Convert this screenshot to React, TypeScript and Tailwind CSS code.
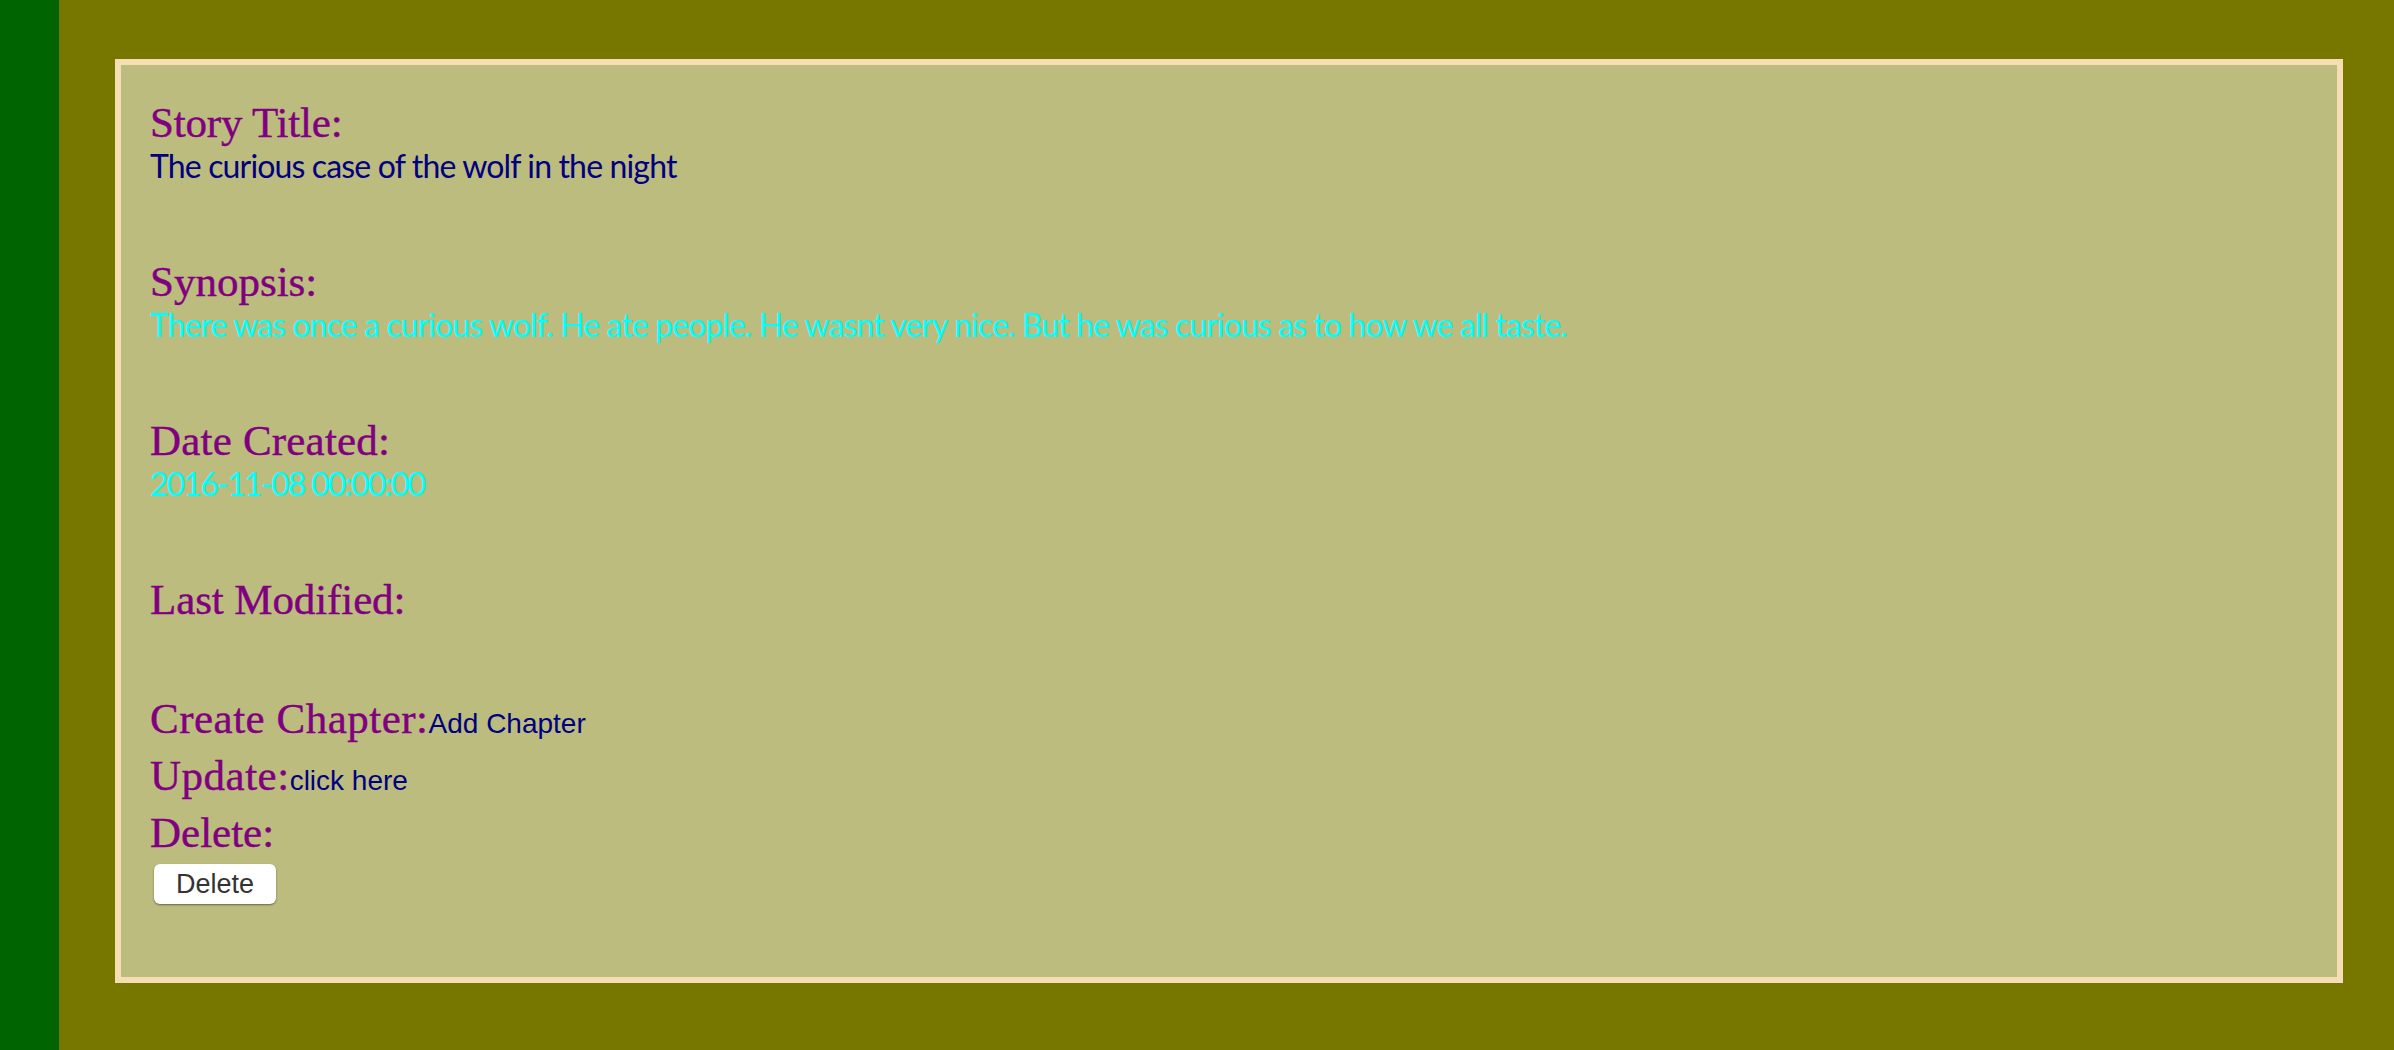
const fields = [
  {
    label: "Story Title:",
    labelTrack: "tracking-[-0.2px]",
    value: "The curious case of the wolf in the night",
    tone: "text-[#000080] tracking-[-0.85px]",
  },
  {
    label: "Synopsis:",
    labelTrack: "tracking-[0px]",
    value: "There was once a curious wolf. He ate people. He wasnt very nice. But he was curious as to how we all taste.",
    tone: "text-[#00ffff] tracking-[-0.91px]",
  },
  {
    label: "Date Created:",
    labelTrack: "tracking-[0.2px]",
    value: "2016-11-08 00:00:00",
    tone: "text-[#00ffff] tracking-[-1.75px]",
  },
  { label: "Last Modified:", labelTrack: "tracking-[-0.1px]", value: "", tone: "" },
];

function Label({ children, track }: { children: string; track: string }) {
  return (
    <span className={`font-['Liberation_Serif',serif] text-[43px] leading-[57px] text-[#800080] [-webkit-text-stroke:0.4px_#800080] ${track}`}>
      {children}
    </span>
  );
}

function ActionLink({ children }: { children: string }) {
  return <a className="font-['Liberation_Sans',sans-serif] text-[28px] text-[#000080]">{children}</a>;
}

export default function App() {
  return (
    <div className="flex h-[1050px] w-[2394px] overflow-hidden bg-[#777700]">
      {/* left strip */}
      <div className="h-full w-[59px] bg-[#006400]" />

      <div className="flex-1 pt-[59px] pr-[51px] pb-[67px] pl-[56px]">
        <div className="h-full border-[6px] border-[#f5deb3] bg-[#bcbc7e] pt-[29px] pl-[29px]">
          {fields.map((field) => (
            <div key={field.label} className="mb-[61px] h-[98px]">
              <div className="h-[57px]">
                <Label track={field.labelTrack}>{field.label}</Label>
              </div>
              {field.value && (
                <div className={`-mt-[6px] font-['Lato',sans-serif] text-[32px] leading-[41px] ${field.tone}`}>
                  {field.value}
                </div>
              )}
            </div>
          ))}

          <div className="-mt-[40px]">
            <div className="h-[57px]">
              <Label track="tracking-[0.5px]">Create Chapter:</Label>
              <ActionLink>Add Chapter</ActionLink>
            </div>
            <div className="h-[57px]">
              <Label track="tracking-[0.5px]">Update:</Label>
              <ActionLink>click here</ActionLink>
            </div>
            <div className="h-[57px]">
              <Label track="tracking-[0px]">Delete:</Label>
            </div>
            <button className="mt-[3px] ml-[4px] h-[40px] w-[122px] rounded-[6px] bg-white font-['Liberation_Sans',sans-serif] text-[27px] leading-[40px] text-[#333333] shadow-[0_1px_2px_rgba(0,0,0,0.45)]">
              Delete
            </button>
          </div>
        </div>
      </div>
    </div>
  );
}
